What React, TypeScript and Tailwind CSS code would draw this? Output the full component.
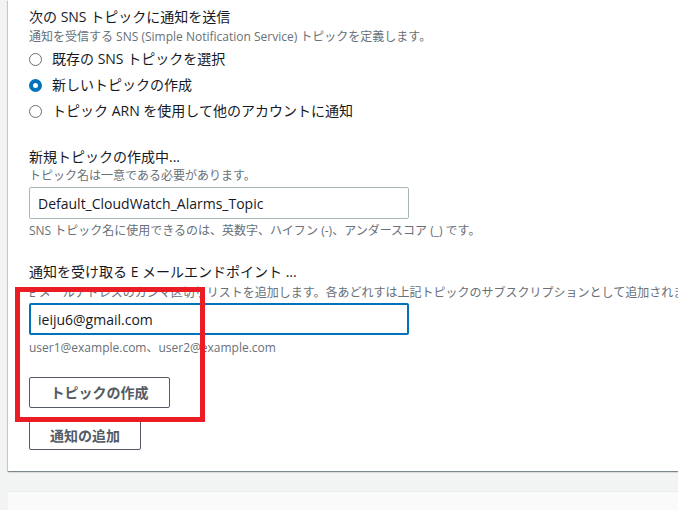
import React from "react";

const font = { fontFamily: '"Open Sans", "Noto Sans CJK JP", sans-serif' };

function Radio({ checked, label }: { checked?: boolean; label: string }) {
  return (
    <div className="flex h-[26px] items-center">
      {checked ? (
        <span className="box-border h-[13px] w-[13px] rounded-full border-[4px] border-[#0073bb] bg-white" />
      ) : (
        <span className="box-border h-[13px] w-[13px] rounded-full border-[1.5px] border-[#687078] bg-white" />
      )}
      <span className="ml-[10px] text-[14px] leading-[20px] text-[#16191f]">{label}</span>
    </div>
  );
}

export default function App() {
  return (
    <div className="relative h-[510px] w-[678px] overflow-hidden bg-[#f2f3f3]" style={font}>
      <div className="ml-[8px] w-[720px] bg-white pb-[21px] pl-[21px] pt-[7px] shadow-[0_1px_1px_0_rgba(0,28,36,0.3),1px_1px_1px_0_rgba(0,28,36,0.15),-1px_1px_1px_0_rgba(0,28,36,0.15)]">
        <div className="text-[14px] leading-[20px] text-[#16191f]">次の SNS トピックに通知を送信</div>
        <div className="mt-[2px] text-[12px] leading-[16px] text-[#687078]">
          通知を受信する SNS (Simple Notification Service) トピックを定義します。
        </div>
        <div className="mt-[1px] flex flex-col">
          <Radio label="既存の SNS トピックを選択" />
          <Radio checked label="新しいトピックの作成" />
          <Radio label="トピック ARN を使用して他のアカウントに通知" />
        </div>

        <div className="mt-[23px] text-[14px] leading-[20px] text-[#16191f]">新規トピックの作成中...</div>
        <div className="mt-[1px] text-[12px] leading-[16px] text-[#687078]">トピック名は一意である必要があります。</div>
        <div className="mt-[3px] box-border flex h-[32px] w-[380px] items-center rounded-[2px] border border-[#aab7b8] px-[8px] text-[14px] text-[#16191f]">
          Default_CloudWatch_Alarms_Topic
        </div>
        <div className="mt-[4px] text-[12px] leading-[16px] text-[#687078]">
          SNS トピック名に使用できるのは、英数字、ハイフン (-)、アンダースコア (_) です。
        </div>

        <div className="mt-[23px] text-[14px] leading-[20px] text-[#16191f]">通知を受け取る E メールエンドポイント ...</div>
        <div className="mt-[3px] whitespace-nowrap text-[12px] leading-[16px] text-[#687078]">
          E メールアドレスのカンマ区切りリストを追加します。各あどれすは上記トピックのサブスクリプションとして追加されます。
        </div>
        <div className="mt-[2px] box-border flex h-[32px] w-[380px] items-center rounded-[2px] border-2 border-[#0073bb] px-[7px] text-[14px] text-[#16191f]">
          ieiju6@gmail.com
        </div>
        <div className="mt-[5px] text-[12px] leading-[16px] text-[#687078]">user1@example.com、user2@example.com</div>

        <div className="mt-[21px] box-border flex h-[31px] w-[141px] items-center justify-center rounded-[2px] border border-[#545b64] text-[14px] font-bold text-[#545b64]">
          トピックの作成
        </div>
        <div className="mt-[12px] box-border flex h-[30px] w-[112px] items-center justify-center rounded-[2px] border border-[#545b64] text-[14px] font-bold text-[#545b64]">
          通知の追加
        </div>
      </div>

      <div className="ml-[8px] mt-[20px] h-[40px] w-[720px] border-t border-[#eaeded] bg-[#fafafa]" />

      <div className="pointer-events-none absolute left-[15px] top-[287px] box-border h-[135px] w-[190px] border-[5px] border-[#ec1c24]" />
    </div>
  );
}
